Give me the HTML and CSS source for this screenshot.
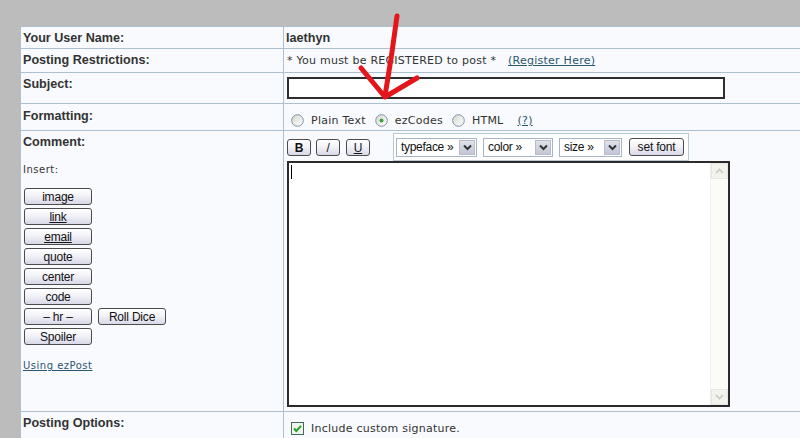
FILE: index.html
```html
<!DOCTYPE html>
<html>
<head>
<meta charset="utf-8">
<link rel="stylesheet" href="styles.css">
</head>
<body>
<table class="form">
  <tr>
    <td><div class="lab h-user">Your User Name:</div></td>
    <td><div class="val h-user bold">laethyn</div></td>
  </tr>
  <tr>
    <td><div class="lab h-restr">Posting Restrictions:</div></td>
    <td><div class="val h-restr small restr">* You must be REGISTERED to post * <a class="lnk reg" href="#">(Register Here)</a></div></td>
  </tr>
  <tr>
    <td><div class="lab h-subj">Subject:</div></td>
    <td><div class="val h-subj subj"><div class="subject-input"></div></div></td>
  </tr>
  <tr>
    <td><div class="lab h-fmt fmt-lab">Formatting:</div></td>
    <td>
      <div class="val h-fmt fmt small">
        <span class="radio"><svg width="13" height="13" viewBox="0 0 13 13"><defs><linearGradient id="rg" x1="0" y1="0" x2="1" y2="1"><stop offset="0" stop-color="#d6d6cf"/><stop offset="1" stop-color="#ffffff"/></linearGradient></defs><circle cx="6.5" cy="6.5" r="5.8" fill="url(#rg)" stroke="#7f91a8" stroke-width="1"/></svg></span><span class="rlabel">Plain Text</span>
        <span class="radio"><svg width="13" height="13" viewBox="0 0 13 13"><circle cx="6.5" cy="6.5" r="5.8" fill="url(#rg)" stroke="#7f91a8" stroke-width="1"/><circle cx="6.5" cy="6.5" r="2" fill="#3ea33e"/></svg></span><span class="rlabel">ezCodes</span>
        <span class="radio"><svg width="13" height="13" viewBox="0 0 13 13"><circle cx="6.5" cy="6.5" r="5.8" fill="url(#rg)" stroke="#7f91a8" stroke-width="1"/></svg></span><span class="rlabel">HTML</span>
        <a class="lnk help" href="#">(?)</a>
      </div>
    </td>
  </tr>
  <tr>
    <td>
      <div class="lab h-comment">
        Comment:
        <div class="insert">Insert:</div>
        <div class="ins-buttons">
          <div class="brow"><span class="btn">image</span></div>
          <div class="brow"><span class="btn u">link</span></div>
          <div class="brow"><span class="btn u">email</span></div>
          <div class="brow"><span class="btn">quote</span></div>
          <div class="brow"><span class="btn">center</span></div>
          <div class="brow"><span class="btn">code</span></div>
          <div class="brow"><span class="btn">&ndash; hr &ndash;</span><span class="btn">Roll Dice</span></div>
          <div class="brow"><span class="btn">Spoiler</span></div>
        </div>
        <a class="lnk using" href="#">Using ezPost</a>
      </div>
    </td>
    <td>
      <div class="val h-comment comment">
        <div class="toolbar">
          <span class="btn fmtbtn b">B</span>
          <span class="btn fmtbtn i">/</span>
          <span class="btn fmtbtn un">U</span>
          <div class="fontbox">
            <span class="sel w-type"><span class="seltext">typeface &raquo;</span><span class="selarrow"><svg width="9" height="7" viewBox="0 0 9 7"><path d="M1 1.5 L4.5 5 L8 1.5" fill="none" stroke="#333" stroke-width="2"/></svg></span></span>
            <span class="sel w-color"><span class="seltext">color &raquo;</span><span class="selarrow"><svg width="9" height="7" viewBox="0 0 9 7"><path d="M1 1.5 L4.5 5 L8 1.5" fill="none" stroke="#333" stroke-width="2"/></svg></span></span>
            <span class="sel w-size"><span class="seltext">size &raquo;</span><span class="selarrow"><svg width="9" height="7" viewBox="0 0 9 7"><path d="M1 1.5 L4.5 5 L8 1.5" fill="none" stroke="#333" stroke-width="2"/></svg></span></span>
            <span class="btn setfont">set font</span>
          </div>
        </div>
        <div class="editor">
          <div class="caret"></div>
          <div class="vscroll">
            <div class="sbtn"><svg width="9" height="6" viewBox="0 0 9 6"><path d="M1 5 L4.5 1.5 L8 5" fill="none" stroke="#c9c9c4" stroke-width="1.6"/></svg></div>
            <div class="sbtn"><svg width="9" height="6" viewBox="0 0 9 6"><path d="M1 1 L4.5 4.5 L8 1" fill="none" stroke="#c9c9c4" stroke-width="1.6"/></svg></div>
          </div>
        </div>
      </div>
    </td>
  </tr>
  <tr>
    <td><div class="lab h-opts">Posting Options:</div></td>
    <td>
      <div class="val h-opts opts small">
        <span class="check"><svg width="13" height="13" viewBox="0 0 13 13"><rect x="0.5" y="0.5" width="12" height="12" fill="#f3f3ee" stroke="#3f6b5e"/><path d="M3 6.5 L5.3 9 L10 3.8" fill="none" stroke="#24a024" stroke-width="2"/></svg></span><span class="rlabel">Include custom signature.</span>
      </div>
    </td>
  </tr>
</table>
<svg class="arrow" width="800" height="438" viewBox="0 0 800 438">
  <path d="M397 16 Q392 55 385 96" fill="none" stroke="#e3161c" stroke-width="5" stroke-linecap="round"/>
  <path d="M361 68 L385 97 L417 78" fill="none" stroke="#e3161c" stroke-width="5" stroke-linecap="round" stroke-linejoin="round"/>
</svg>
</body>
</html>
```
FILE: styles.css
```css
html, body {
  margin: 0;
  height: 100%;
  overflow: hidden;
}
body {
  background: #bcbcbc;
  padding: 26px 0 0 20px;
  box-sizing: border-box;
  font-family: "Liberation Sans", Arial, sans-serif;
  color: #333;
  position: relative;
}
.form {
  border-collapse: collapse;
  background: #f8fafd;
}
.form td {
  border: 1px solid #adc0cf;
  padding: 0;
  vertical-align: top;
}
.lab {
  width: 262px;
  box-sizing: border-box;
  padding: 4px 0 0 2px;
  font-weight: bold;
  font-size: 12.6px;
  line-height: 15px;
  color: #333;
}
.val {
  width: 516px;
  box-sizing: border-box;
  padding: 4px 0 0 2px;
  font-size: 12.6px;
  line-height: 15px;
}
.bold { font-weight: bold; }
.small {
  font-family: "DejaVu Sans", Verdana, sans-serif;
  font-size: 11px;
  line-height: 13px;
  letter-spacing: 0.25px;
  color: #333;
}
.restr { padding-top: 5px; padding-left: 3px; }
.h-user { height: 21px; }
.h-restr { height: 23px; }
.h-subj { height: 30px; }
.h-fmt { height: 26px; }
.h-comment { height: 280px; }
.h-opts { height: 26px; }
.fmt-lab { padding-top: 5px; }

.lnk {
  color: #2d5570;
  text-decoration: underline;
}
.reg { margin-left: 8px; }

.subj { padding-top: 4px; padding-left: 3px; }
.subject-input {
  width: 438px;
  height: 22px;
  box-sizing: border-box;
  border: 2px solid #2e2e2e;
  background: #fff;
}

.fmt {
  display: flex;
  align-items: center;
  padding: 6px 0 0 7px;
  height: 26px;
}
.radio, .check {
  display: inline-block;
  width: 13px;
  height: 13px;
  line-height: 0;
}
.rlabel { margin: 0 9px 0 7px; }
.help { margin-left: 5px; }

.insert {
  font-weight: normal;
  font-family: "DejaVu Sans", Verdana, sans-serif;
  font-size: 10px;
  letter-spacing: 0.5px;
  line-height: 12px;
  margin-top: 14px;
}
.ins-buttons {
  margin-top: 12px;
  display: flex;
  flex-direction: column;
  gap: 3px;
}
.brow {
  display: flex;
  gap: 6px;
  margin-left: 1px;
}
.btn {
  display: inline-flex;
  align-items: center;
  justify-content: center;
  box-sizing: border-box;
  width: 68px;
  height: 17px;
  border: 1px solid #4c4c4c;
  border-radius: 3px;
  background: linear-gradient(#ffffff 0%, #f2f2f8 45%, #d9d8e8 100%);
  font-family: "Liberation Sans", Arial, sans-serif;
  font-weight: normal;
  font-size: 12px;
  letter-spacing: -0.2px;
  color: #111;
  line-height: 1;
}
.btn.u { text-decoration: underline; }
.using {
  display: inline-block;
  margin-top: 15px;
  font-family: "DejaVu Sans", Verdana, sans-serif;
  font-weight: normal;
  font-size: 10px;
  letter-spacing: 0.5px;
  line-height: 12px;
}

.comment { padding: 0 0 0 3px; }
.toolbar {
  display: flex;
  align-items: flex-start;
  height: 30px;
}
.fmtbtn {
  width: 24px;
  height: 17px;
  margin-top: 8px;
  margin-right: 6px;
  font-size: 12px;
}
.fmtbtn.b { font-weight: bold; margin-right: 5px; }
.fmtbtn.un { text-decoration: underline; margin-right: 23px; }
.fontbox {
  margin-top: 2px;
  width: 296px;
  height: 28px;
  box-sizing: border-box;
  border: 1px solid #b7c7d4;
  background: #fff;
  display: flex;
  align-items: center;
  padding-left: 2px;
  gap: 6px;
}
.sel {
  display: inline-flex;
  align-items: center;
  justify-content: space-between;
  box-sizing: border-box;
  height: 19px;
  border: 1px solid #a6b6c7;
  background: #fff;
  padding: 1px;
  font-size: 12px;
  letter-spacing: -0.3px;
  color: #111;
}
.seltext { padding-left: 3px; }
.selarrow {
  width: 16px;
  height: 15px;
  box-sizing: border-box;
  border: 1px solid #b9bccb;
  background: linear-gradient(#dfe1ea, #c2c5d6);
  display: flex;
  align-items: center;
  justify-content: center;
}
.w-type { width: 81px; }
.w-color { width: 70px; }
.w-size { width: 63px; }
.setfont {
  width: 55px;
  height: 18px;
  margin-left: 1px;
}

.editor {
  width: 443px;
  height: 246px;
  box-sizing: border-box;
  border: 2px solid #2b2b2b;
  background: #fff;
  display: flex;
  justify-content: space-between;
}
.caret {
  width: 1px;
  height: 14px;
  background: #000;
  margin: 2px 0 0 2px;
}
.vscroll {
  width: 17px;
  background: #fbfbf8;
  border-left: 1px solid #f0f0ec;
  display: flex;
  flex-direction: column;
  justify-content: space-between;
}
.sbtn {
  height: 16px;
  box-sizing: border-box;
  border: 1px solid #e6e6e0;
  background: #f3f3ee;
  display: flex;
  align-items: center;
  justify-content: center;
}

.opts {
  display: flex;
  align-items: center;
  padding: 6px 0 0 7px;
  height: 26px;
}

.arrow {
  position: absolute;
  left: 0;
  top: 0;
  pointer-events: none;
}
```
